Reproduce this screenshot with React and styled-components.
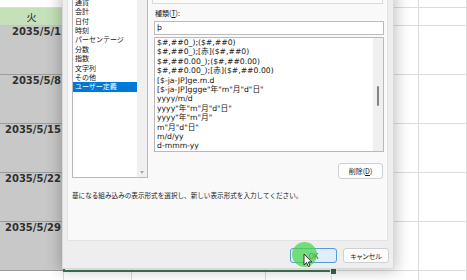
import React from 'react';
import styled, { createGlobalStyle } from 'styled-components';

const GlobalStyle = createGlobalStyle`
  html, body {
    margin: 0;
    padding: 0;
    background: #fff;
    overflow: hidden;
  }
`;

const jp = `"Noto Sans CJK JP", "DejaVu Sans", sans-serif`;
const latin = `"DejaVu Sans", "Noto Sans CJK JP", sans-serif`;

const Stage = styled.div`
  position: relative;
  width: 467px;
  height: 280px;
  overflow: hidden;
  background: #fff;
`;

/* ---------- spreadsheet behind the dialog ---------- */

const Sheet = styled.div`
  display: grid;
  grid-template-columns: 64px 68px 134px 66px 87px 48px;
  grid-template-rows: 8px 18px repeat(5, 49px) 20px;
`;

const Cell = styled.div`
  box-sizing: border-box;
  border-right: 1px solid #dcdcdc;
  border-bottom: 1px solid #dcdcdc;
  background: #fff;
`;

const HeadCell = styled(Cell)`
  display: flex;
  align-items: center;
  justify-content: center;
  background: #c5e1ba;
  border-bottom-color: #b9cfb0;
  font-family: ${jp};
  font-size: 10px;
  color: #222;
`;

const DateCell = styled(Cell)`
  background: #c8c8c8;
  border-bottom-color: #9c9c9c;
  border-right-color: #b5b5b5;
  text-align: right;
  padding-right: 2px;
  font-family: "DejaVu Sans", sans-serif;
  font-weight: bold;
  font-size: 10px;
  line-height: 12px;
  color: #303030;
`;

const Selection = styled.div`
  position: absolute;
  left: 63px;
  top: 26px;
  width: 271px;
  height: 246px;
  box-sizing: border-box;
  border: 2px solid #3d7a52;
`;

const FillHandle = styled.div`
  position: absolute;
  left: 330px;
  top: 268px;
  width: 5px;
  height: 5px;
  background: #2f6b44;
  border: 1px solid #fff;
`;

/* ---------- format cells dialog ---------- */

const Dialog = styled.div`
  position: absolute;
  left: 63px;
  top: -40px;
  width: 330px;
  height: 308px;
  display: flex;
  flex-direction: column;
  background: #eeeeee;
  box-shadow: 0 0 0 1px #d9d9d9, 0 0 14px 3px rgba(0, 0, 0, 0.24);
`;

const Page = styled.div`
  margin: 4px 5px 0 4px;
  height: 277px;
  box-sizing: border-box;
  padding: 13px 3px 0 4px;
  background: #f9f9f9;
  border: 1px solid #e3e3e3;
`;

const Body = styled.div`
  display: grid;
  grid-template-columns: 76px 230px;
  column-gap: 6px;
`;

const ListBox = styled.div`
  display: flex;
  box-sizing: border-box;
  height: ${p => p.$h}px;
  border: 1px solid #b9b9b9;
  background: #fff;
  overflow: hidden;
`;

const Items = styled.div`
  flex: 1;
  min-width: 0;
`;

const CategoryItem = styled.div`
  height: 9.4px;
  line-height: 9.4px;
  padding-left: 2px;
  font-family: ${jp};
  font-size: 7px;
  white-space: nowrap;
  color: ${p => (p.$active ? '#fff' : '#161616')};
  background: ${p => (p.$active ? '#0078d7' : 'transparent')};
`;

const FormatItem = styled.div`
  height: 9.4px;
  line-height: 9.4px;
  padding-left: 2px;
  font-family: ${latin};
  font-size: 7.7px;
  white-space: nowrap;
  color: #161616;
`;

const ScrollTrack = styled.div`
  width: ${p => p.$w}px;
  background: #f0f0f0;
  display: flex;
  flex-direction: column;
  align-items: center;
  justify-content: ${p => (p.$end ? 'flex-end' : 'flex-start')};
  padding-bottom: ${p => (p.$end ? 3 : 0)}px;
  box-sizing: border-box;
`;

const DownArrow = styled.div`
  width: 0;
  height: 0;
  border-left: 2.5px solid transparent;
  border-right: 2.5px solid transparent;
  border-top: 3px solid #a8a8a8;
`;

const Thumb = styled.div`
  margin-top: 48px;
  width: 2px;
  height: 20px;
  border-radius: 1px;
  background: #858585;
`;

const RightColumn = styled.div`
  display: flex;
  flex-direction: column;
`;

const SampleBox = styled.div`
  height: 26px;
  margin: 0 1px 0 -2px;
  box-sizing: border-box;
  border: 1px solid #dadada;
  background: #fbfbfb;
`;

const Label = styled.div`
  margin-top: 4px;
  padding-left: 1px;
  height: 10px;
  line-height: 10px;
  font-family: ${jp};
  font-size: 7px;
  color: #1a1a1a;

  u {
    text-underline-offset: 1px;
  }
`;

const TypeInput = styled.div`
  margin-top: 3px;
  height: 14px;
  box-sizing: border-box;
  border: 1px solid #bcbcbc;
  background: #fff;
  padding-left: 2px;
  font-family: ${latin};
  font-size: 7.7px;
  line-height: 12px;
  color: #161616;
`;

const Button = styled.div`
  box-sizing: border-box;
  width: ${p => p.$w}px;
  height: ${p => p.$h}px;
  display: flex;
  align-items: center;
  justify-content: center;
  border: 1px solid ${p => (p.$primary ? '#5b9bd5' : '#d0d0d0')};
  border-radius: 3px;
  background: ${p => (p.$primary ? '#e1eef9' : '#fdfdfd')};
  font-family: ${jp};
  font-size: 7px;
  font-feature-settings: "palt";
  color: #1a1a1a;

  u {
    text-underline-offset: 1px;
  }
`;

const DeleteRow = styled.div`
  margin-top: 11px;
  display: flex;
  justify-content: flex-end;
  padding-right: 1px;
`;

const Description = styled.div`
  margin-top: 11px;
  height: 10px;
  line-height: 10px;
  font-family: ${jp};
  font-size: 6.6px;
  white-space: nowrap;
  color: #1a1a1a;
`;

const ButtonBar = styled.div`
  display: flex;
  justify-content: flex-end;
  gap: 6px;
  padding: 7px 4px 0 0;
`;

const ClickRing = styled.div`
  position: absolute;
  left: 292px;
  top: 242px;
  width: 25px;
  height: 25px;
  border-radius: 50%;
  background: rgba(72, 214, 72, 0.72);
`;

const Pointer = styled.svg`
  position: absolute;
  left: 303px;
  top: 253px;
`;

const categories = [
  '標準', '数値', '通貨', '会計', '日付', '時刻', 'パーセンテージ',
  '分数', '指数', '文字列', 'その他', 'ユーザー定義',
];

const formats = [
  '$#,##0_);($#,##0)',
  '$#,##0_);[赤]($#,##0)',
  '$#,##0.00_);($#,##0.00)',
  '$#,##0.00_);[赤]($#,##0.00)',
  '[$-ja-JP]ge.m.d',
  '[$-ja-JP]ggge"年"m"月"d"日"',
  'yyyy/m/d',
  'yyyy"年"m"月"d"日"',
  'yyyy"年"m"月"',
  'm"月"d"日"',
  'm/d/yy',
  'd-mmm-yy',
];

const dates = ['2035/5/1', '2035/5/8', '2035/5/15', '2035/5/22', '2035/5/29'];
const COLS = 6;

const SheetGrid = () => {
  const cells = [];
  for (let c = 0; c < COLS; c++) cells.push(<Cell key={`t${c}`} />);
  cells.push(<HeadCell key="h0">火</HeadCell>);
  for (let c = 1; c < COLS; c++) cells.push(<Cell key={`h${c}`} />);
  dates.forEach((d, r) => {
    cells.push(<DateCell key={`d${r}`}>{d}</DateCell>);
    for (let c = 1; c < COLS; c++) cells.push(<Cell key={`r${r}c${c}`} />);
  });
  for (let c = 0; c < COLS; c++) cells.push(<Cell key={`b${c}`} />);
  return <Sheet>{cells}</Sheet>;
};

const App = () => (
  <Stage>
    <GlobalStyle />
    <SheetGrid />
    <Selection />
    <FillHandle />

    <Dialog>
      <Page>
        <Body>
          <ListBox $h={200}>
            <Items>
              {categories.map(c => (
                <CategoryItem key={c} $active={c === 'ユーザー定義'}>{c}</CategoryItem>
              ))}
            </Items>
            <ScrollTrack $w={10} $end>
              <DownArrow />
            </ScrollTrack>
          </ListBox>

          <RightColumn>
            <SampleBox />
            <Label>種類(<u>T</u>):</Label>
            <TypeInput>þ</TypeInput>
            <ListBox $h={115} style={{ marginTop: 2 }}>
              <Items>
                {formats.map(f => (
                  <FormatItem key={f}>{f}</FormatItem>
                ))}
              </Items>
              <ScrollTrack $w={10}>
                <Thumb />
              </ScrollTrack>
            </ListBox>
            <DeleteRow>
              <Button $w={45} $h={16}>削除(<u>D</u>)</Button>
            </DeleteRow>
          </RightColumn>
        </Body>
        <Description>
          基になる組み込みの表示形式を選択し、新しい表示形式を入力してください。
        </Description>
      </Page>

      <ButtonBar>
        <Button $w={47} $h={15} $primary>OK</Button>
        <Button $w={46} $h={15}>キャンセル</Button>
      </ButtonBar>
    </Dialog>

    <ClickRing />
    <Pointer width="10" height="15" viewBox="0 0 10 15">
      <path
        d="M1 1 L1 12 L3.6 9.6 L5.4 13.6 L7 12.9 L5.3 9 L8.8 9 Z"
        fill="#fff"
        stroke="#222"
        strokeWidth="0.9"
        strokeLinejoin="round"
      />
    </Pointer>
  </Stage>
);

export default App;
